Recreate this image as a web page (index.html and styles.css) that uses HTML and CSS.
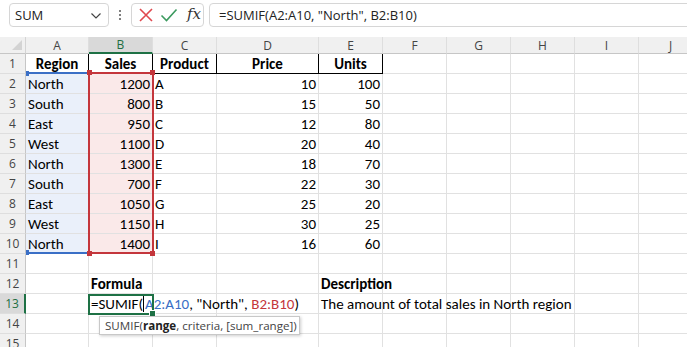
FILE: index.html
```html
<!DOCTYPE html>
<html lang="en">
<head>
    <meta charset="UTF-8">
    <title>SUMIF - Book1</title>
    <link rel="stylesheet" href="styles.css">
</head>
<body>

    <!-- Name box + formula bar -->
    <div class="bar">
        <div class="namebox">
            <span>SUM</span>
            <svg class="chev" width="12" height="8" viewBox="0 0 12 8"><path d="M1.5 1.5 L6 6 L10.5 1.5" fill="none" stroke="#444" stroke-width="1.2"/></svg>
        </div>
        <div class="dots"><i></i><i></i><i></i></div>
        <div class="fxgroup">
            <svg width="16" height="16" viewBox="0 0 16 16"><path d="M2 2 L14 14 M14 2 L2 14" stroke="#e0484e" stroke-width="1.6" fill="none"/></svg>
            <svg width="18" height="16" viewBox="0 0 18 16"><path d="M1.5 8.5 L6.5 13.5 L16.5 2.5" stroke="#3c9a5f" stroke-width="1.6" fill="none"/></svg>
            <span class="fx">fx</span>
        </div>
        <div class="formula">=SUMIF(A2:A10, "North", B2:B10)</div>
    </div>

    <div class="sheet">
        <div class="grid">
            <div class="corner"><span class="tri"></span></div>
            <div class="ch">A</div><div class="ch sel">B</div><div class="ch">C</div><div class="ch">D</div><div class="ch">E</div>
            <div class="ch">F</div><div class="ch">G</div><div class="ch">H</div><div class="ch">I</div><div class="ch">J</div>

            <div class="rh">1</div>
            <div class="c hd">Region</div><div class="c hd">Sales</div><div class="c hd">Product</div><div class="c hd">Price</div><div class="c hd">Units</div>
            <div class="c"></div><div class="c"></div><div class="c"></div><div class="c"></div><div class="c"></div>

            <div class="rh">2</div>
            <div class="c blue">North</div><div class="c pink num">1200</div><div class="c">A</div><div class="c num">10</div><div class="c num">100</div>
            <div class="c"></div><div class="c"></div><div class="c"></div><div class="c"></div><div class="c"></div>

            <div class="rh">3</div>
            <div class="c blue">South</div><div class="c pink num">800</div><div class="c">B</div><div class="c num">15</div><div class="c num">50</div>
            <div class="c"></div><div class="c"></div><div class="c"></div><div class="c"></div><div class="c"></div>

            <div class="rh">4</div>
            <div class="c blue">East</div><div class="c pink num">950</div><div class="c">C</div><div class="c num">12</div><div class="c num">80</div>
            <div class="c"></div><div class="c"></div><div class="c"></div><div class="c"></div><div class="c"></div>

            <div class="rh">5</div>
            <div class="c blue">West</div><div class="c pink num">1100</div><div class="c">D</div><div class="c num">20</div><div class="c num">40</div>
            <div class="c"></div><div class="c"></div><div class="c"></div><div class="c"></div><div class="c"></div>

            <div class="rh">6</div>
            <div class="c blue">North</div><div class="c pink num">1300</div><div class="c">E</div><div class="c num">18</div><div class="c num">70</div>
            <div class="c"></div><div class="c"></div><div class="c"></div><div class="c"></div><div class="c"></div>

            <div class="rh">7</div>
            <div class="c blue">South</div><div class="c pink num">700</div><div class="c">F</div><div class="c num">22</div><div class="c num">30</div>
            <div class="c"></div><div class="c"></div><div class="c"></div><div class="c"></div><div class="c"></div>

            <div class="rh">8</div>
            <div class="c blue">East</div><div class="c pink num">1050</div><div class="c">G</div><div class="c num">25</div><div class="c num">20</div>
            <div class="c"></div><div class="c"></div><div class="c"></div><div class="c"></div><div class="c"></div>

            <div class="rh">9</div>
            <div class="c blue">West</div><div class="c pink num">1150</div><div class="c">H</div><div class="c num">30</div><div class="c num">25</div>
            <div class="c"></div><div class="c"></div><div class="c"></div><div class="c"></div><div class="c"></div>

            <div class="rh">10</div>
            <div class="c blue">North</div><div class="c pink num">1400</div><div class="c">I</div><div class="c num">16</div><div class="c num">60</div>
            <div class="c"></div><div class="c"></div><div class="c"></div><div class="c"></div><div class="c"></div>

            <div class="rh">11</div>
            <div class="c"></div><div class="c"></div><div class="c"></div><div class="c"></div><div class="c"></div>
            <div class="c"></div><div class="c"></div><div class="c"></div><div class="c"></div><div class="c"></div>

            <div class="rh">12</div>
            <div class="c"></div><div class="c bold">Formula</div><div class="c"></div><div class="c"></div><div class="c bold">Description</div>
            <div class="c"></div><div class="c"></div><div class="c"></div><div class="c"></div><div class="c"></div>

            <div class="rh sel">13</div>
            <div class="c"></div>
            <div class="c edit">=SUMIF(<span class="caret"></span><span class="ref-a">A2:A10</span>, "North", <span class="ref-b">B2:B10</span>)</div>
            <div class="c"></div><div class="c"></div>
            <div class="c over">The amount of total sales in North region</div>
            <div class="c"></div><div class="c"></div><div class="c"></div><div class="c"></div><div class="c"></div>

            <div class="rh">14</div>
            <div class="c"></div><div class="c"></div><div class="c"></div><div class="c"></div><div class="c"></div>
            <div class="c"></div><div class="c"></div><div class="c"></div><div class="c"></div><div class="c"></div>

            <div class="rh">15</div>
            <div class="c"></div><div class="c"></div><div class="c"></div><div class="c"></div><div class="c"></div>
            <div class="c"></div><div class="c"></div><div class="c"></div><div class="c"></div><div class="c"></div>
        </div>

        <!-- range highlights and active cell drawn over the grid -->
        <div class="range-a"><i class="h tl"></i><i class="h bl"></i></div>
        <div class="range-b"><i class="h tl"></i><i class="h tr"></i><i class="h bl"></i><i class="h br"></i></div>
        <div class="active"><i class="fill"></i></div>
        <div class="tip">SUMIF(<b>range</b>, criteria, [sum_range])</div>
    </div>

</body>
</html>
```

FILE: styles.css
```css
body {
    margin: 0;
    width: 687px;
    height: 347px;
    overflow: hidden;
    background-color: #fff;
    font-family: "Open Sans", "Liberation Sans", sans-serif;
}

/* formula bar */
.bar {
    display: flex;
    align-items: flex-start;
    height: 37px;
    padding: 3px 0 0 9px;
    box-sizing: border-box;
}
.namebox {
    width: 100px;
    height: 24px;
    box-sizing: border-box;
    border: 1px solid #d6d6d6;
    border-radius: 4px;
    display: flex;
    align-items: center;
    justify-content: space-between;
    padding: 0 6px 0 5px;
    font-size: 13px;
    color: #222;
}
.chev {
    margin-top: 1px;
}
.dots {
    width: 22px;
    height: 24px;
    display: flex;
    flex-direction: column;
    align-items: center;
    justify-content: center;
    gap: 2px;
}
.dots i {
    width: 2px;
    height: 2px;
    background-color: #555;
    border-radius: 1px;
}
.fxgroup {
    width: 73px;
    height: 24px;
    box-sizing: border-box;
    border: 1px solid #d6d6d6;
    border-radius: 4px;
    display: flex;
    align-items: center;
    gap: 6px;
    padding-left: 6px;
}
.fx {
    font-family: "DejaVu Serif", "Liberation Serif", serif;
    font-style: italic;
    font-size: 15px;
    color: #333;
    margin-left: 3px;
    margin-top: -2px;
}
.formula {
    flex: 1;
    margin-left: 5px;
    margin-right: -10px;
    height: 24px;
    box-sizing: border-box;
    border: 1px solid #d6d6d6;
    border-radius: 4px;
    padding-left: 9px;
    line-height: 22px;
    font-size: 13px;
    color: #222;
}

/* sheet */
.sheet {
    position: relative;
}
.grid {
    display: grid;
    grid-template-columns: 26px 63px 64px 64px 102px 64px 64px 64px 64px 64px 64px;
    grid-template-rows: 17px repeat(15, 20px);
    font-family: "Carlito", "Lato", sans-serif;
    font-size: 15px;
    color: #000;
}
.corner, .ch, .rh {
    background-color: #f0f0f0;
    box-sizing: border-box;
    border-right: 1px solid #d4d4d4;
    border-bottom: 1px solid #c6c6c6;
    font-family: "Open Sans", "Liberation Sans", sans-serif;
    font-size: 12px;
    color: #444;
    display: flex;
    align-items: center;
    justify-content: center;
}
.ch {
    border-right-color: #dedede;
}
.ch.sel {
    background-color: #d9d9d9;
    color: #1e6e42;
    border-bottom: 2px solid #1e7145;
}
.rh {
    border-bottom-color: #dedede;
    border-right-color: #c6c6c6;
}
.rh.sel {
    background-color: #d9d9d9;
    color: #1e6e42;
    border-right: 2px solid #1e7145;
}
.corner {
    position: relative;
}
.tri {
    position: absolute;
    right: 3px;
    bottom: 3px;
    width: 0;
    height: 0;
    border-left: 10px solid transparent;
    border-bottom: 10px solid #d3d3d3;
}
.c {
    box-sizing: border-box;
    border-right: 1px solid #e1e1e1;
    border-bottom: 1px solid #e1e1e1;
    padding: 1px 2px 0;
    line-height: 19px;
    white-space: nowrap;
}
.hd {
    font-weight: bold;
    text-align: center;
    border-right-color: #000;
    border-bottom-color: #000;
}
.num {
    text-align: right;
}
.bold {
    font-weight: bold;
}
.blue {
    background-color: #eaf0fa;
}
.pink {
    background-color: #fae9e9;
}
.edit, .over {
    overflow: visible;
    position: relative;
    z-index: 2;
}
.ref-a {
    color: #3a6fc6;
}
.ref-b {
    color: #c4363c;
}
.caret {
    display: inline-block;
    width: 1px;
    height: 16px;
    background-color: #000;
    vertical-align: -3px;
    margin-right: 1px;
}

/* overlays */
.range-a {
    position: absolute;
    left: 26px;
    top: 35px;
    width: 63px;
    height: 182px;
    box-sizing: border-box;
    border-top: 2px solid #3a6fc6;
    border-bottom: 2px solid #3a6fc6;
}
.range-b {
    position: absolute;
    left: 88px;
    top: 35px;
    width: 66px;
    height: 182px;
    box-sizing: border-box;
    border: 2px solid #c4363c;
}
.h {
    position: absolute;
    width: 5px;
    height: 5px;
}
.range-a .h { background-color: #3a6fc6; width: 3px; }
.range-b .h { background-color: #c4363c; }
.range-a .tl { left: 0; top: -3px; }
.range-a .bl { left: 0; bottom: -3px; }
.range-b .tl { left: -3px; top: -4px; }
.range-b .tr { right: -3px; top: -4px; }
.range-b .bl { left: -3px; bottom: -4px; }
.range-b .br { right: -3px; bottom: -4px; }

.active {
    position: absolute;
    left: 88px;
    top: 257px;
    width: 66px;
    height: 21px;
    box-sizing: border-box;
    border: 2px solid #1e7145;
    z-index: 3;
}
.fill {
    position: absolute;
    right: -4px;
    bottom: -4px;
    width: 5px;
    height: 5px;
    background-color: #1e7145;
    border: 1px solid #fff;
}
.tip {
    position: absolute;
    left: 99px;
    top: 279px;
    width: 201px;
    height: 19px;
    box-sizing: border-box;
    padding: 0 0 0 5px;
    background-color: #fff;
    border: 1px solid #c8c8c8;
    box-shadow: 1px 1px 3px rgba(0, 0, 0, 0.2);
    font-size: 11.6px;
    line-height: 17px;
    color: #444;
    white-space: nowrap;
    overflow: hidden;
    z-index: 4;
}
.tip b {
    color: #222;
}
```
